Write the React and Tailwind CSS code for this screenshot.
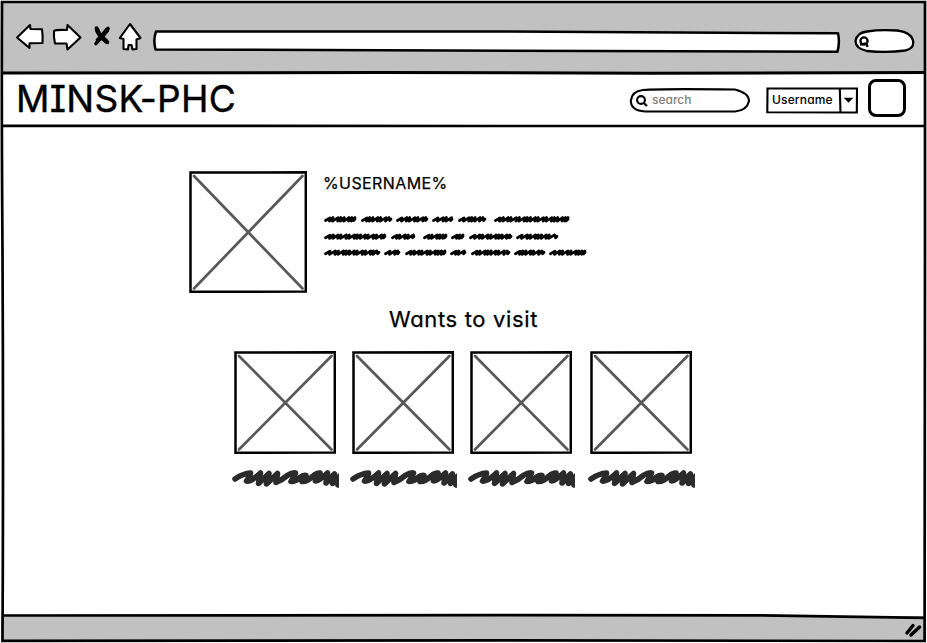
import React from "react";

const WORDS = [
  { y: 219.2, spans: [[324, 356], [361, 392], [396, 428], [432, 453], [458, 486], [494, 569]] },
  { y: 236.5, spans: [[324, 386], [391, 415], [423, 447], [451, 464], [469, 512], [516, 558]] },
  { y: 252.5, spans: [[324, 380], [384, 400], [405, 446], [450, 466], [471, 510], [514, 545], [549, 586]] },
];

const STEPS = [3, 5.2, 2.6, 3.4, 4.8, 2.8, 5.4];

function wordPath(a, b, y, seed) {
  const end = b - 1;
  let x = a + 1.5;
  let d = `M${x} ${y + 1.3}L${x + 4.5} ${y - 1.2}`;
  x += 4.5;
  let i = seed;
  while (x < end - 2.5) {
    const step = STEPS[i % STEPS.length];
    d += `L${x - 0.5} ${y + 1.9}L${Math.min(x + step, end)} ${y - 1.6}`;
    x += step;
    i += 1;
  }
  return d + `L${end - 1.4} ${y + 1.4}L${end} ${y - 0.2}`;
}

function ScribbleText() {
  return (
    <svg className="mt-[19px] block h-[48px] w-[266px]" viewBox="322 212 266 48" fill="none" stroke="#000" strokeWidth="2.8" strokeLinecap="round" strokeLinejoin="round">
      {WORDS.map((row, r) => row.spans.map(([a, b], i) => <path key={`${r}-${i}`} d={wordPath(a, b, row.y, r * 3 + i * 2)} />))}
    </svg>
  );
}

function Caption() {
  return (
    <svg className="-ml-[2px] mt-[14px] block h-[20px] w-[107px]" viewBox="4 7 107 20" fill="none" stroke="#2b2b2b" strokeWidth="5.6" strokeLinecap="round" strokeLinejoin="round">
      <path d="M7 18Q15 12.500 22.500 12Q22 15 18.500 20Q23 21 32.500 12L30.500 22.500L41 12.500L38.500 23L49.500 12.500L48 21.500Q54 19 60 14Q64 11.500 67.500 12Q66 16 63 20.500Q68 20.500 72 16.500Q75 14 78 14.500Q76 18 74 20.500Q79 21 85 15Q89 11.500 92 12Q90 16 87.500 20Q91 20 99.500 12L98 22L106.500 13L104.500 22.500L112 15L110 24" />
    </svg>
  );
}

function Placeholder({ width, height }) {
  const w = width;
  const h = height;
  return (
    <svg className="block shrink-0" width={w} height={h} viewBox={`0 0 ${w} ${h}`} fill="none">
      <path d={`M5 5L${w - 4.5} ${h - 4.5}M${w - 4.5} 5L5 ${h - 4.5}`} stroke="#585858" strokeWidth="2.7" strokeLinecap="round" />
      <path d={`M1.500 1.500L${w - 1.2} 1.300L${w - 1.2} ${h - 1.4}L1.500 ${h - 1.2}Z`} stroke="#000" strokeWidth="2.5" />
    </svg>
  );
}

function Toolbar() {
  return (
    <div className="flex h-[71px] shrink-0 items-start bg-[#c1c1c1] pl-[13px] pt-[19px]">
      <svg className="h-[34px] w-[130px] shrink-0" viewBox="14 20 130 34" fill="#fff" stroke="#000" strokeWidth="2.100" strokeLinejoin="round">
        <path d="M17 37.500L30 25L30.500 29L42 29.300Q43 36 42.500 43L29.500 43.300L29.500 48Z" />
        <path d="M54 31Q56 29.500 67 30L67.500 25L80.500 37.500L67.500 49.500L66.500 43.500L55 43.500Q53.500 37 54 31Z" />
        <path d="M96.500 28Q98 34 101.500 36.500Q106 42 107.500 42.500M108 28.500Q104 34 101.500 37Q98 41 96 43.500" fill="none" strokeWidth="3.600" strokeLinecap="round" />
        <path d="M97 29.500Q99 35 101.500 36.500Q104 34 107 30M98 40L101.500 37L106 41" fill="none" strokeWidth="4.600" strokeLinecap="round" />
        <path d="M130 24L140.500 38L136.500 39.500L136.500 49L132.500 49.500L131.500 45L128.500 45L128 49.500L123.500 49L123.500 39L119.800 38Z" />
      </svg>
      <svg className="ml-[8px] mt-[8px] h-[26px] w-[690px] shrink-0" viewBox="152 28 690 26" fill="#fff" stroke="#000" strokeWidth="2.500">
        <path d="M156 31.500L500 31.500Q700 32.500 838 33.300Q840 42 837.500 51.700L155.500 49.500Q153 40 156 31.500Z" strokeLinejoin="round" />
      </svg>
      <svg className="ml-[11px] mt-[6px] h-[30px] w-[63px] shrink-0" viewBox="853 26 63 30" fill="#fff" stroke="#000" strokeWidth="2.300">
        <path d="M867 31.500Q880 29.300 897 30.500Q912 32.500 913.300 42Q913.500 49 905 50.500Q888 53 867 51Q855.500 48.500 855.500 41Q857 32.500 867 31.500Z" />
        <circle cx="864" cy="41" r="3.600" />
        <path d="M860 44.500L866.500 43.500L867.500 47" fill="none" strokeWidth="2.400" />
      </svg>
    </div>
  );
}

function Header() {
  return (
    <header className="flex h-[54px] shrink-0 items-start">
      <h1 className="ml-[15px] mt-[5px] w-[222px] shrink-0 whitespace-nowrap text-[37px] leading-[44px] tracking-[0.3px] [-webkit-text-stroke:0.4px_#000]">MINSK-PHC</h1>
      <div className="relative ml-[391px] mt-[15px] flex h-[26px] w-[122px] shrink-0 items-center">
        <svg className="absolute inset-0 h-[26px] w-[122px]" viewBox="629 87 122 26" fill="none" stroke="#000" strokeWidth="2.100">
          <path d="M643 90Q660 88.500 735 89.500Q749 93 749 101Q747 110.500 735 111.500L645 111.500Q631 110.500 630.800 101Q632 91 643 90Z" />
          <circle cx="641" cy="100" r="3.900" />
          <path d="M643.700 103L647 106" strokeWidth="2.200" />
        </svg>
        <span className="ml-[23px] text-[12px] font-medium leading-[16px] text-[#808080]">search</span>
      </div>
      <div className="relative ml-[14px] mt-[14px] flex h-[28px] w-[94px] shrink-0">
        <svg className="absolute inset-0 h-[28px] w-[94px]" viewBox="765 86 94 28" fill="none" stroke="#000" strokeWidth="2.100">
          <path d="M767.500 88.500L857 88.500L856.800 112.500L767.300 112.200Z" />
          <path d="M839.800 88.500L840.500 112.500" />
          <path d="M843.700 97.700H853.300L848.500 102.800Z" fill="#000" stroke="none" />
        </svg>
        <span className="ml-[7px] mt-[6px] text-[12px] font-medium leading-[16px] tracking-[0.15px]">Username</span>
      </div>
      <div className="ml-[9px] mt-[7px] h-[38px] w-[38px] shrink-0 rounded-[8px] border-[3px] border-black bg-white" />
    </header>
  );
}

function FrameStrokes() {
  return (
    <svg className="pointer-events-none absolute inset-0 h-[643px] w-[927px]" viewBox="0 0 927 643" fill="none" stroke="#000" strokeWidth="2.700">
      <path d="M1 2H925L925 240L924.600 641L500 640.300L2.500 640.800Q3.500 450 2.500 250Q1.500 120 2 1" />
      <path d="M2 73L380 72.500L650 73.200L926 72.500" strokeWidth="3" />
      <path d="M2 125.800L500 126L926 126" />
      <path d="M2 615.500L500 615.200L760 615.400L925 617.800" />
      <path d="M907 633L913 625.500M911 635L919.500 627" strokeWidth="3.500" strokeLinecap="round" />
    </svg>
  );
}

export default function App() {
  return (
    <div className="h-[643px] w-[927px] overflow-hidden bg-white px-px pb-[2px] pt-px text-black">
      <div className="flex h-[640px] w-[925px] flex-col [font-family:Inter,Lato,sans-serif] [font-feature-settings:'cv11','cv08']">
        <Toolbar />
        <Header />
        <main className="flex grow flex-col">
          <section className="ml-[188px] mt-[45px] flex items-start">
            <Placeholder width={118} height={122} />
            <div className="ml-[15px]">
              <h2 className="mt-[2px] whitespace-nowrap pl-px text-[16px] leading-[20px] tracking-[0.4px] [-webkit-text-stroke:0.25px_#000]">%USERNAME%</h2>
              <ScribbleText />
            </div>
          </section>
          <h2 className="ml-[388px] mt-[11px] whitespace-nowrap text-[22px] leading-[30px] tracking-[0.65px] [-webkit-text-stroke:0.25px_#000]">Wants to visit</h2>
          <section className="ml-[233px] mt-[17px] flex">
            <div className="w-[118px]"><Placeholder width={102} height={103} /><Caption /></div>
            <div className="w-[118px]"><Placeholder width={102} height={103} /><Caption /></div>
            <div className="w-[120px]"><Placeholder width={102} height={103} /><Caption /></div>
            <div className="w-[118px]"><Placeholder width={102} height={103} /><Caption /></div>
          </section>
        </main>
        <footer className="h-[25px] shrink-0 bg-[#c1c1c1]" />
      </div>
      <FrameStrokes />
    </div>
  );
}
